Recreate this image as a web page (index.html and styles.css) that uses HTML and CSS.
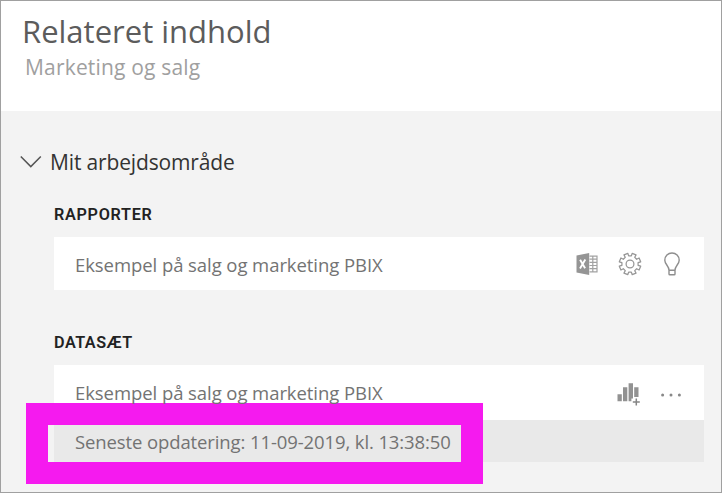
FILE: index.html
```html
<!DOCTYPE html>
<html lang="da">
<head>
<meta charset="utf-8">
<title>Relateret indhold</title>
<link rel="stylesheet" href="styles.css">
</head>
<body>
<div class="pane">
  <header class="header">
    <h1 class="title">Relateret indhold</h1>
    <p class="subtitle">Marketing og salg</p>
  </header>
  <main class="content">
    <div class="workspace">
      <svg class="chevron" width="22" height="14" viewBox="0 0 22 14"><path d="M.8 1.5 10.8 11.6 20.8 1.5" fill="none" stroke="#555" stroke-width="1.5"/></svg>
      <span class="workspace-name">Mit arbejdsområde</span>
    </div>
    <section class="group">
      <h2 class="heading reports">RAPPORTER</h2>
      <div class="row report-row">
        <span class="name">Eksempel på salg og marketing PBIX</span>
        <div class="icons">
          <svg width="22" height="22" viewBox="-.5 0 22 22"><path d="M0 2.5 12.7 0V22L0 19.5Z" fill="#959595"/><path d="M13 3.1h7.5v15.8H13M13 6.2h7.5M13 9.4h7.5M13 12.5h7.5M13 15.7h7.5M16.3 3v16" fill="none" stroke="#a2a2a2" stroke-width="1.2"/><path d="m3.6 6.8 5 8.5M8.8 6.6l-5.3 8.8" stroke="#fff" stroke-width="1.9"/></svg>
          <svg class="gear" width="24" height="24" viewBox="-12 -12 24 24" fill="none" stroke="#969696" stroke-width="1.25" stroke-linejoin="round"><path id="gear" d=""/><circle r="3.9"/></svg>
          <svg class="bulb" width="18" height="26" viewBox="0 0 18 26" fill="none" stroke="#8e8e8e" stroke-width="1.4"><path d="M6 19.3C6 14.9 1.8 13.2 1.8 9.2a7.2 7.2 0 0 1 14.4 0c0 4-4.2 5.7-4.2 10.1ZM6 19.3v3.6q0 .8.8.8h4.4q.8 0 .8-.8v-3.6"/></svg>
        </div>
      </div>
    </section>
    <section class="group">
      <h2 class="heading datasets">DATASÆT</h2>
      <div class="row dataset-row">
        <span class="name">Eksempel på salg og marketing PBIX</span>
        <div class="icons">
          <svg class="chart" width="24" height="24" viewBox="0 0 24 24" fill="#929292"><path d="M.5 11.3H4.8v7H.5ZM6 4.3h4.3v14H6ZM11.6.2H16v15.3h-1.6v2.8h-2.8ZM17.2 4.3h4.3v9.8h-4.3Z"/><path d="M19.3 15.4v7M15.8 18.9h7" stroke="#858585" stroke-width="1.5"/></svg>
          <svg class="dots" width="22" height="4" viewBox="0 0 22 4" fill="#888"><circle cx="2.6" cy="2" r="1.5"/><circle cx="11" cy="2" r="1.5"/><circle cx="19.4" cy="2" r="1.5"/></svg>
        </div>
      </div>
      <div class="row refresh-row">
        <span class="refresh">Seneste opdatering: 11-09-2019, kl. 13:38:50</span>
      </div>
    </section>
  </main>
  <div class="callout"></div>
</div>
<script src="gear.js"></script>
</body>
</html>
```

FILE: styles.css
```css
* { box-sizing: border-box; margin: 0; padding: 0; }
body { font-family: "Open Sans", "Noto Sans", sans-serif; }
.pane {
  position: relative;
  width: 722px;
  height: 493px;
  border: 1px solid #a0a0a0;
  background: #f3f3f3;
  overflow: hidden;
}
.header { height: 110px; padding: 9px 0 0 21px; background: #fff; }
.title { font-size: 31px; line-height: 42px; font-weight: 400; color: #5c5c5c; white-space: nowrap; }
.subtitle { font-size: 21px; line-height: 28px; margin: 1px 0 0 3px; letter-spacing: .18px; color: #a0a0a0; white-space: nowrap; }
.content { padding: 37px 17px 0 19px; }
.workspace { display: flex; align-items: center; height: 28px; }
.chevron { flex: none; margin-right: 8px; }
.workspace-name { font-size: 21px; line-height: 28px; letter-spacing: -.15px; color: #333; white-space: nowrap; }
.group { margin-left: 34px; }
.heading { font: 600 16.2px/24px Roboto, sans-serif; letter-spacing: .7px; color: #222; }
.reports { margin-top: 26px; height: 35px; padding-top: 1px; }
.datasets { margin-top: 40px; height: 35px; padding-top: 1px; letter-spacing: .5px; }
.row { display: flex; justify-content: space-between; align-items: center; width: 650px; padding-left: 21px; background: #fff; color: #737373; }
.report-row { height: 53px; }
.dataset-row { height: 55px; }
.refresh-row { height: 42px; background: #e9e9e9; }
.name, .refresh { position: relative; z-index: 2; font-size: 18.5px; line-height: 26px; letter-spacing: -.07px; white-space: nowrap; }
.report-row .name, .refresh { padding-top: 2px; }
.refresh { letter-spacing: -.11px; }
.icons { display: flex; align-items: center; }
.report-row .icons { padding-right: 23px; }
.gear { margin: 0 21px 0 20px; }
.dataset-row .icons { padding-right: 22px; }
.chart { margin: 4px 19px 0 0; }
.dots { margin-top: 4px; }
.callout { position: absolute; z-index: 1; left: 25px; top: 402px; width: 457px; height: 81px; border: 22px solid #f51aef; }
```

FILE: gear.js
```js
// Build an eight-tooth gear outline.
const points = [];
for (let i = 0; i < 8; i++) {
  const c = i * 45 + 22.5;
  for (const [r, a] of [[8.2, -13], [10.9, -11], [10.9, 11], [8.2, 13]]) {
    const t = (c + a) * Math.PI / 180;
    points.push((r * Math.cos(t)).toFixed(2) + ' ' + (r * Math.sin(t)).toFixed(2));
  }
}
document.getElementById('gear').setAttribute('d', 'M' + points.join('L') + 'Z');
```
